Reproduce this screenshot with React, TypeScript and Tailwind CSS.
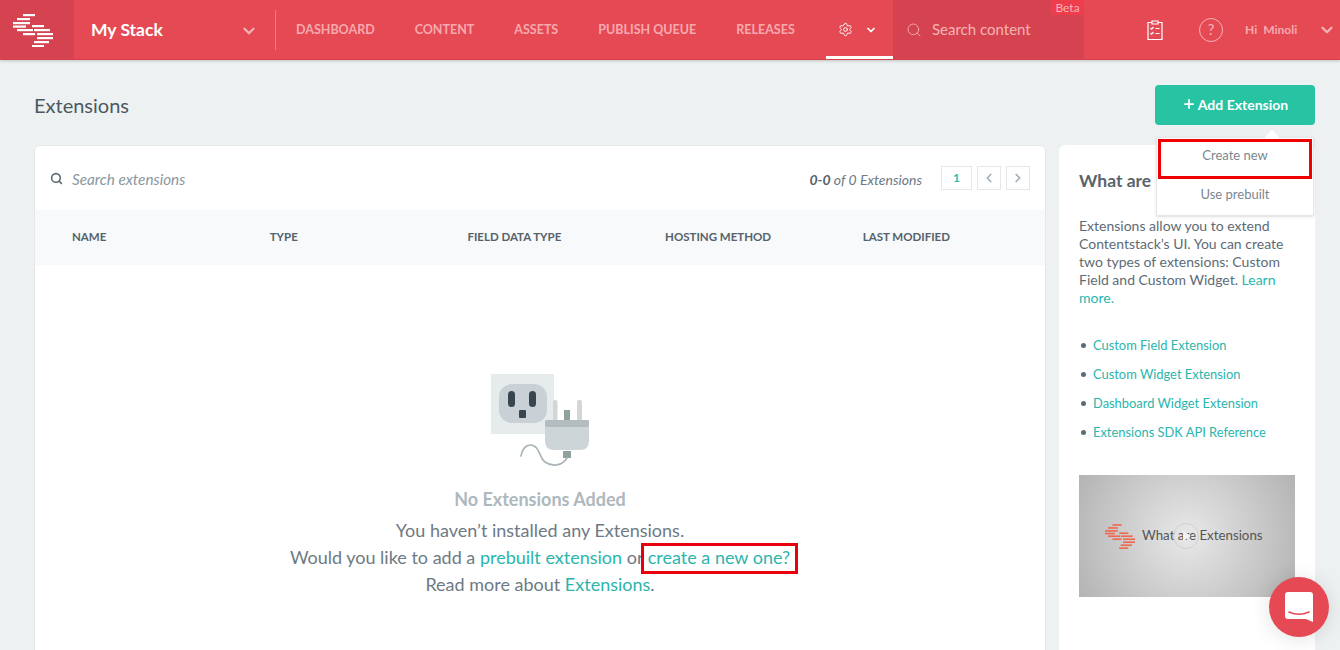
import { ChevronDown, ChevronLeft, ChevronRight, Search, Settings, Plus } from "lucide-react";

const logoBars = [
  [10, 0, 12],
  [4, 4, 13],
  [0, 8, 17],
  [0, 11.5, 13],
  [4, 15, 16],
  [10, 19, 12],
  [19, 11, 12],
  [21, 15, 16],
  [24, 19, 16],
  [24, 23, 16],
  [21, 27, 15],
  [19, 31, 12],
];

const Logo = ({ color = "#fff", className = "" }: { color?: string; className?: string }) => (
  <svg viewBox="0 0 40 33" className={className} fill={color}>
    {logoBars.map(([x, y, w]) => (
      <rect key={`${x}-${y}`} x={x} y={y} width={w} height="2.2" />
    ))}
  </svg>
);

const Plug = () => (
  <svg viewBox="0 0 100 94" className="h-[94px] w-[100px]">
    <rect x="1" y="0" width="63" height="60" fill="#e6ebeb" />
    <rect x="9" y="10" width="48" height="39" rx="13" fill="#c9d1d6" />
    <rect x="18" y="17" width="7" height="16" rx="3.5" fill="#37454f" />
    <rect x="39" y="17" width="7" height="16" rx="3.5" fill="#37454f" />
    <rect x="29" y="36" width="7" height="8" rx="1" fill="#37454f" />
    <rect x="63" y="26" width="4.5" height="22" rx="2" fill="#d3d6d6" />
    <rect x="87" y="26" width="5" height="22" rx="2" fill="#d3d6d6" />
    <rect x="74" y="36" width="6" height="12" fill="#90a29e" />
    <path d="M55 46h44v21q0 9-9 9h-26q-9 0-9-9z" fill="#ced5d9" />
    <rect x="55" y="46" width="44" height="7" rx="2" fill="#b3bcbf" />
    <rect x="73" y="77" width="8" height="7" fill="#90a29e" />
    <path d="M31 82C32 75 36 71 40 71C50 71 49 84 55 88C62 93 72 92 77 84" fill="none" stroke="#a9b4b9" strokeWidth="1.7" strokeLinecap="round" />
  </svg>
);

const navItems = ["DASHBOARD", "CONTENT", "ASSETS", "PUBLISH QUEUE", "RELEASES"];
const columns = ["NAME", "TYPE", "FIELD DATA TYPE", "HOSTING METHOD", "LAST MODIFIED"];
const guideLinks = [
  "Custom Field Extension",
  "Custom Widget Extension",
  "Dashboard Widget Extension",
  "Extensions SDK API Reference",
];

export default function App() {
  return (
    <div className="relative h-[650px] w-[1340px] overflow-hidden bg-[#edf1f2] font-['Lato',sans-serif] text-[#5d6b75]">
      {/* HEADER */}
      <header className="flex h-[60px] items-stretch border-b border-[#d8404a] bg-[#e54a54] shadow-[0_1px_3px_rgba(0,0,0,0.2)]">
        <div className="flex w-[74px] items-center bg-[#d4434f] pl-[13px] pt-[2px]">
          <Logo className="h-[33px] w-[40px]" />
        </div>
        <div className="flex w-[201px] items-center justify-between pl-[17px] pr-[17px] pt-[2px]">
          <span className="text-[17.5px] font-bold text-white">My Stack</span>
          <ChevronDown size={18} strokeWidth={3} className="text-[#f5b0b5]" />
        </div>
        <div className="my-auto h-[40px] w-px bg-[#ef7c83]" />
        <nav className="ml-[20px] flex w-[530px] shrink-0 items-center gap-[40px] whitespace-nowrap pt-[2px] text-[12.5px] font-bold text-[#f6a9ae]">
          {navItems.map((item) => (
            <span key={item}>{item}</span>
          ))}
        </nav>
        <div className="flex w-[67px] shrink-0 items-center gap-[12px] border-b-[3px] border-white pl-[12px] pt-[3px] text-white">
          <Settings size={15} strokeWidth={1.5} />
          <ChevronDown size={12} strokeWidth={3.5} />
        </div>
        <div className="relative flex w-[191px] shrink-0 items-center gap-[10px] bg-[#d4434f] pl-[13px] text-[15px] text-[#f6b3b7]">
          <Search size={16} strokeWidth={1.3} />
          <span>Search content</span>
          <span className="absolute right-0 top-0 flex h-[15px] w-[33px] items-center justify-center bg-[#ee3d4d] text-[12px] leading-none text-[#f6b3b7]">
            Beta
          </span>
        </div>
        <div className="ml-[63px] flex items-center text-white">
          <svg viewBox="0 0 16 20" className="h-[20px] w-[16px]" fill="none" stroke="currentColor" strokeWidth="1.2">
            <path d="M5 2.5H1v17h14v-17h-4" />
            <path d="M5 1h6v3H5z" />
            <path d="M3.5 8l1.2 1.2L6.5 7M3.5 13l1.2 1.2L6.5 12" />
            <path d="M8.5 8.5h4M8.5 13.5h4" />
          </svg>
        </div>
        <div className="ml-[36px] flex items-center">
          <div className="flex h-[24px] w-[24px] items-center justify-center rounded-full border border-[#f6b3b7] text-[15px] text-[#f6b3b7]">
            ?
          </div>
        </div>
        <div className="ml-[22px] flex w-[56px] items-center gap-[6px] whitespace-nowrap text-[12px] font-bold text-[#f6a9ae]">
          <span>Hi</span>
          <span>Minoli</span>
        </div>
        <div className="ml-[17px] flex items-center text-[#f6b3b7]">
          <ChevronDown size={18} strokeWidth={3} />
        </div>
      </header>

      {/* PAGE */}
      <main className="pl-[34px] pr-[25px]">
        <div className="flex h-[85px] items-start justify-between pt-[25px]">
          <h1 className="-mt-px text-[20px] leading-[43px] text-[#4c5861]">Extensions</h1>
          <button className="flex h-[40px] w-[160px] items-center justify-center gap-[2px] rounded-[4px] bg-[#27c3a3] pb-[2px] text-[14px] font-bold text-white">
            <Plus size={14} strokeWidth={3} />
            Add Extension
          </button>
        </div>

        <div className="flex gap-[13px]">
          {/* TABLE CARD */}
          <section className="h-[600px] w-[1012px] shrink-0 rounded-[6px] border border-[#e4e8ea] bg-white">
            <div className="flex h-[64px] items-center pl-[15px] pr-[15px]">
              <Search size={13} strokeWidth={3} className="text-[#5d6b75]" />
              <span className="ml-[9px] pt-[2px] text-[15.3px] italic text-[#8b979f]">Search extensions</span>
              <span className="ml-auto pt-[2px] text-[14px] italic text-[#6c7a84]">
                <b className="text-[#55626c]">0-0</b> of 0 Extensions
              </span>
              <span className="ml-[19px] flex h-[24px] w-[31px] items-center justify-center border border-[#e4e8ea] text-[12px] font-bold text-[#2bbfae]">
                1
              </span>
              <span className="ml-[5px] flex h-[24px] w-[24px] items-center justify-center border border-[#e4e8ea] text-[#a3afb7]">
                <ChevronLeft size={14} strokeWidth={3} />
              </span>
              <span className="ml-[5px] flex h-[24px] w-[24px] items-center justify-center border border-[#e4e8ea] text-[#a3afb7]">
                <ChevronRight size={14} strokeWidth={3} />
              </span>
            </div>
            <div className="grid h-[55px] grid-cols-[repeat(5,197.7px)] items-center bg-[#f7f9fa] pb-[2px] pl-[37px] text-[11.5px] font-bold text-[#55626c]">
              {columns.map((col) => (
                <span key={col}>{col}</span>
              ))}
            </div>
            <div className="flex flex-col items-center pt-[109px]">
              <Plug />
              <h3 className="mt-[20px] text-[18px] font-bold leading-[22px] text-[#aeb8bd]">No Extensions Added</h3>
              <div className="mt-[7px] text-center text-[18px] leading-[27px] text-[#6d7a84]">
                <p>You haven’t installed any Extensions.</p>
                <p>
                  Would you like to add a <a className="text-[#2bb5ad]">prebuilt extension</a> or{" "}
                  <a className="text-[#2bb5ad]">create a new one?</a>
                </p>
                <p>
                  Read more about <a className="text-[#2bb5ad]">Extensions</a>.
                </p>
              </div>
            </div>
          </section>

          {/* GUIDE CARD */}
          <aside className="h-[600px] w-[256px] shrink-0 rounded-[6px] bg-white px-[20px] pt-[25px]">
            <h2 className="whitespace-nowrap text-[17.5px] font-bold leading-[22px] text-[#5a646b]">What are Extensions?</h2>
            <p className="mt-[25px] text-[14px] leading-[18px] text-[#5d6b75]">
              Extensions allow you to extend Contentstack’s UI. You can create two types of extensions: Custom Field and
              Custom Widget. <a className="text-[#2bb5ad]">Learn more.</a>
            </p>
            <ul className="mt-[29px] flex flex-col gap-[11px] text-[12.9px] leading-[18px] text-[#2bb5ad]">
              {guideLinks.map((link) => (
                <li key={link} className="ml-[2px] flex items-center gap-[7px] whitespace-nowrap">
                  <span className="h-[5px] w-[5px] rounded-full bg-[#5d6b75]" />
                  {link}
                </li>
              ))}
            </ul>
            <div className="relative mt-[34px] flex h-[122px] w-[216px] items-center gap-[7px] bg-[radial-gradient(circle,#e8e8e8_0%,#b3b3b3_100%)] pl-[26px]">
              <Logo color="#ee6a50" className="h-[25px] w-[30px]" />
              <span className="text-[13.3px] text-[#555]">What are Extensions</span>
              <span className="absolute left-[94px] top-[48px] flex h-[26px] w-[26px] items-center justify-center rounded-full border border-[#d0d0d0]">
                <span className="ml-[2px] h-0 w-0 border-y-[5px] border-l-[8px] border-y-transparent border-l-[#f2f2f2]" />
              </span>
            </div>
          </aside>
        </div>
      </main>

      {/* DROPDOWN */}
      <div className="absolute left-[1156px] top-[137px] w-[158px] border border-[#e4e8ea] bg-white text-center text-[13px] text-[#7a8791] shadow-sm">
        <div className="absolute left-[110px] top-[-6px] h-[10px] w-[10px] rotate-45 bg-white" />
        <div className="relative flex h-[35px] items-center justify-center">Create new</div>
        <div className="relative flex h-[42px] items-center justify-center pt-[2px]">Use prebuilt</div>
      </div>

      {/* RED HIGHLIGHTS */}
      <div className="absolute left-[1158px] top-[139px] h-[40px] w-[154px] border-[3px] border-[#f00000]" />
      <div className="absolute left-[641px] top-[543px] h-[31px] w-[157px] border-[3px] border-[#e8000f]" />

      {/* CHAT */}
      <div className="absolute left-[1269px] top-[577px] flex h-[60px] w-[60px] items-center justify-center rounded-full bg-[#e54a54] shadow-[0_2px_20px_rgba(0,0,0,0.12)]">
        <svg viewBox="0 0 28 30" className="h-[30px] w-[28px]">
          <path d="M3 0h22q3 0 3 3v27l-7-3H3q-3 0-3-3V3q0-3 3-3z" fill="#fff" />
          <path d="M4 20q10 4.5 20 0" fill="none" stroke="#e54a54" strokeWidth="1.6" strokeLinecap="round" />
        </svg>
      </div>
    </div>
  );
}
